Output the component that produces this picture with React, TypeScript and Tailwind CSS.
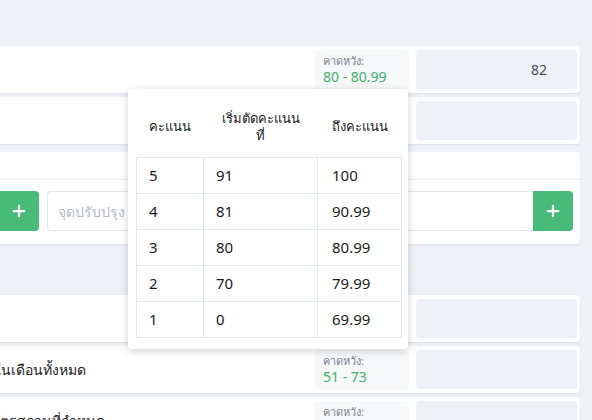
import { Plus } from "lucide-react";

const font = { fontFamily: '"Noto Sans", "Liberation Sans", sans-serif' };

type Rule = { score: number; from: string; to: string };

const rules: Rule[] = [
  { score: 5, from: "91", to: "100" },
  { score: 4, from: "81", to: "90.99" },
  { score: 3, from: "80", to: "80.99" },
  { score: 2, from: "70", to: "79.99" },
  { score: 1, from: "0", to: "69.99" },
];

function Expected({ range }: { range?: string }) {
  return (
    <div className="flex h-[39px] w-[94px] shrink-0 flex-col justify-center rounded bg-[#f6f8fa] px-2 leading-tight">
      {range ? (
        <>
          <span className="text-[11px] text-[#7b8494]">คาดหวัง:</span>
          <span className="text-[14px] text-[#3fb26b]">{range}</span>
        </>
      ) : null}
    </div>
  );
}

function ScoreInput({ value }: { value?: string }) {
  return (
    <div className="flex h-[39px] w-[161px] shrink-0 items-center justify-end rounded bg-[#edf0f4] pr-[30px] text-[14px] text-[#4a4f57]">
      {value}
    </div>
  );
}

type ScoreRowProps = {
  label?: string;
  labelWidth?: string;
  range?: string;
  value?: string;
  showExpected?: boolean;
};

function ScoreRow({ label, labelWidth = "w-[326px]", range, value, showExpected = true }: ScoreRowProps) {
  return (
    <div className="flex h-[47px] items-center gap-[7px] rounded bg-white pr-[3px] shadow-[0_1px_2px_rgba(0,0,0,0.08)]">
      <div className="flex-1">
        <div className={`${labelWidth} overflow-hidden whitespace-nowrap text-right text-[14px] text-[#222]`}>
          {label}
        </div>
      </div>
      {showExpected ? <Expected range={range} /> : <div className="w-[94px]" />}
      <ScoreInput value={value} />
    </div>
  );
}

function AddButton() {
  return (
    <button type="button" className="flex h-[40px] w-[40px] shrink-0 items-center justify-center rounded-r bg-[#48bb78] text-white">
      <Plus size={18} strokeWidth={3} />
    </button>
  );
}

function ImprovementCard() {
  return (
    <div className="flex flex-col rounded bg-white shadow-[0_1px_2px_rgba(0,0,0,0.08)]">
      <div className="h-[28px] border-b border-[#e6e9ee]" />
      <div className="flex gap-2 px-[7px] pt-[11px] pb-[13px]">
        <div className="flex flex-1">
          <div className="h-[40px] flex-1 rounded-l border border-r-0 border-[#e2e6ec]" />
          <AddButton />
        </div>
        <div className="flex w-[526px]">
          <div className="flex h-[40px] flex-1 items-center rounded-l border border-r-0 border-[#e2e6ec] px-[10px] text-[14px] text-[#b4bac4]">
            จุดปรับปรุง
          </div>
          <AddButton />
        </div>
      </div>
    </div>
  );
}

function GradePopover() {
  return (
    <div className="absolute left-[128px] top-[89px] z-10 w-[280px] rounded bg-white pt-2 pr-[6px] pb-[11px] pl-2 shadow-[0_2px_8px_rgba(0,0,0,0.18)]">
      <table className="w-full table-fixed border-collapse text-[15px] text-[#1b1b1b]">
        <colgroup>
          <col className="w-[67px]" />
          <col className="w-[114px]" />
          <col />
        </colgroup>
        <thead>
          <tr className="h-[60px] text-[13px]">
            <th className="px-1 text-center font-normal">คะแนน</th>
            <th className="px-4 text-center font-normal leading-[17px]">เริ่มตัดคะแนนที่</th>
            <th className="whitespace-nowrap px-1 text-center font-normal">ถึงคะแนน</th>
          </tr>
        </thead>
        <tbody>
          {rules.map((rule) => (
            <tr key={rule.score} className="h-[36px]">
              <td className="border border-[#e3e6eb] px-3">{rule.score}</td>
              <td className="border border-[#e3e6eb] px-3">{rule.from}</td>
              <td className="border border-[#e3e6eb] px-[14px]">{rule.to}</td>
            </tr>
          ))}
        </tbody>
      </table>
    </div>
  );
}

export default function App() {
  return (
    <div className="relative h-[420px] w-[592px] overflow-hidden bg-[#eef1f5]" style={font}>
      <div className="-ml-[240px] flex flex-col pt-[46px] pr-3">
        <ScoreRow range="80 - 80.99" value="82" />
        <div className="mt-1">
          <ScoreRow showExpected={false} />
        </div>
        <div className="mt-2">
          <ImprovementCard />
        </div>
        <div className="mt-[51px]">
          <ScoreRow showExpected={false} />
        </div>
        <div className="mt-1">
          <ScoreRow label="ร้อยละการใช้วันลาในเดือนทั้งหมด" labelWidth="w-[326px]" range="51 - 73" />
        </div>
        <div className="mt-1">
          <ScoreRow label="ร้อยละการเข้าออกงานตามบัตรสถานที่กำหนด" labelWidth="w-[345px]" range="51 - 73" />
        </div>
      </div>
      <GradePopover />
    </div>
  );
}
